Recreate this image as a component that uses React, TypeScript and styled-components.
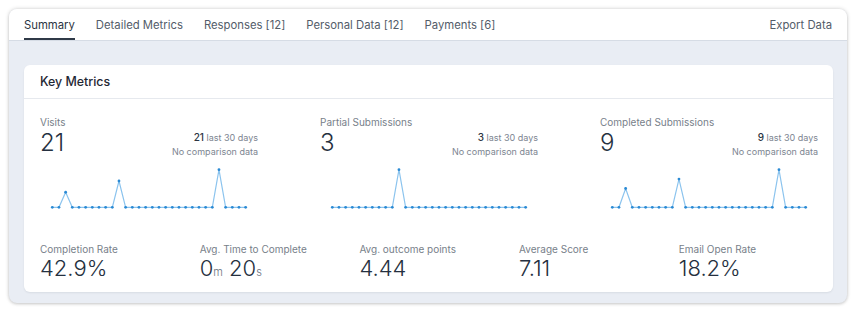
import React from "react";
import styled, { createGlobalStyle } from "styled-components";

const GlobalStyle = createGlobalStyle`
    html, body {
        margin: 0;
        padding: 0;
        background: #ffffff;
    }
    body {
        font-family: Inter, "Noto Sans", sans-serif;
        -webkit-font-smoothing: antialiased;
    }
`;

const tabs = [
    "Summary",
    "Detailed Metrics",
    "Responses [12]",
    "Personal Data [12]",
    "Payments [6]",
];

type Trend = {
    label: string;
    total: number;
    series: number[];
};

const makeSeries = (peaks: Record<number, number>) =>
    Array.from({ length: 30 }, (_, i) => peaks[i] ?? 0);

const trends: Trend[] = [
    { label: "Visits", total: 21, series: makeSeries({ 2: 4, 10: 7, 25: 10 }) },
    { label: "Partial Submissions", total: 3, series: makeSeries({ 10: 3 }) },
    { label: "Completed Submissions", total: 9, series: makeSeries({ 2: 2, 10: 3, 25: 4 }) },
];

export default function App() {
    return (
        <>
            <GlobalStyle />
            <Page>
                <Shell>
                    <TabBar>
                        <TabList>
                            {tabs.map((t, i) => (
                                <Tab key={t} $active={i === 0}>
                                    {t}
                                </Tab>
                            ))}
                        </TabList>
                        <ExportLink>Export Data</ExportLink>
                    </TabBar>
                    <Content>
                        <Card>
                            <CardHeader>Key Metrics</CardHeader>
                            <CardBody>
                                <TrendRow>
                                    {trends.map((t) => (
                                        <TrendBlock key={t.label}>
                                            <Label>{t.label}</Label>
                                            <TrendHead>
                                                <BigValue>{t.total}</BigValue>
                                                <Compare>
                                                    <span>
                                                        <strong>{t.total}</strong> last 30 days
                                                    </span>
                                                    <span>No comparison data</span>
                                                </Compare>
                                            </TrendHead>
                                            <Sparkline series={t.series} />
                                        </TrendBlock>
                                    ))}
                                </TrendRow>
                                <StatRow>
                                    <Stat>
                                        <Label>Completion Rate</Label>
                                        <StatValue>42.9%</StatValue>
                                    </Stat>
                                    <Stat>
                                        <Label>Avg. Time to Complete</Label>
                                        <StatValue>
                                            0<Unit>m</Unit> 20<Unit>s</Unit>
                                        </StatValue>
                                    </Stat>
                                    <Stat>
                                        <Label>Avg. outcome points</Label>
                                        <StatValue>4.44</StatValue>
                                    </Stat>
                                    <Stat>
                                        <Label>Average Score</Label>
                                        <StatValue>7.11</StatValue>
                                    </Stat>
                                    <Stat>
                                        <Label>Email Open Rate</Label>
                                        <StatValue>18.2%</StatValue>
                                    </Stat>
                                </StatRow>
                            </CardBody>
                        </Card>
                    </Content>
                </Shell>
            </Page>
        </>
    );
}

function Sparkline({ series }: { series: number[] }) {
    const max = Math.max(...series, 1);
    const left = 12.3;
    const step = 6.667;
    const base = 47.3;
    const top = 9.7;
    const pts = series.map((v, i) => [left + i * step, base - (v / max) * (base - top)]);
    return (
        <Chart width="218" height="52" viewBox="0 0 218 52">
            <polyline
                points={pts.map((p) => p.join(",")).join(" ")}
                fill="none"
                stroke="#8cc4ee"
                strokeWidth="1.2"
            />
            {pts.map((p, i) => (
                <circle key={i} cx={p[0]} cy={p[1]} r="1.4" fill="#2a8ad4" />
            ))}
        </Chart>
    );
}

const Page = styled.div`
    padding: 9px 10px 9px 9px;
`;
const Shell = styled.div`
    background: #e9edf4;
    border-radius: 8px;
    overflow: hidden;
    box-shadow: 0 0 4px rgba(0, 0, 0, 0.18), 0 1px 3px rgba(0, 0, 0, 0.12);
`;
const TabBar = styled.div`
    height: 31px;
    background: #ffffff;
    border-bottom: 1px solid #d6dce5;
    padding: 0 15px;
    display: flex;
    align-items: stretch;
    justify-content: space-between;
`;
const TabList = styled.div`
    display: flex;
    gap: 21px;
`;
const Tab = styled.div<{ $active?: boolean }>`
    display: flex;
    align-items: center;
    font-size: 11.3px;
    color: ${(p) => (p.$active ? "#2b3442" : "#535c69")};
    border-bottom: 2px solid ${(p) => (p.$active ? "#2f3947" : "transparent")};
    padding-top: 2px;
`;
const ExportLink = styled.div`
    display: flex;
    align-items: center;
    font-size: 11.3px;
    color: #535c69;
`;
const Content = styled.div`
    padding: 24px 14px 11px 15px;
`;
const Card = styled.div`
    background: #ffffff;
    border-radius: 6px;
    box-shadow: 0 1px 2px rgba(16, 24, 40, 0.08);
`;
const CardHeader = styled.div`
    height: 33px;
    display: flex;
    align-items: center;
    padding: 0 16px;
    font-size: 12.4px;
    font-weight: 500;
    color: #1f2733;
    border-bottom: 1px solid #e6e9ee;
`;
const CardBody = styled.div`
    padding: 16px 16px 7px;
`;
const TrendRow = styled.div`
    display: grid;
    grid-template-columns: repeat(3, 1fr);
    column-gap: 62px;
`;
const TrendBlock = styled.div`
    display: flex;
    flex-direction: column;
`;
const Label = styled.div`
    font-size: 10px;
    line-height: 14px;
    color: #787f8a;
    white-space: nowrap;
`;
const TrendHead = styled.div`
    display: flex;
    justify-content: space-between;
    align-items: flex-start;
`;
const BigValue = styled.div`
    font-size: 24px;
    font-weight: 300;
    line-height: 28px;
    color: #253040;
`;
const Compare = styled.div`
    display: flex;
    flex-direction: column;
    align-items: flex-end;
    padding-top: 1px;
    font-size: 9px;
    line-height: 14px;
    color: #7d8591;
    strong {
        font-weight: 500;
        font-size: 10px;
        color: #2b3442;
    }
`;
const Chart = styled.svg`
    display: block;
    margin-top: 1px;
`;
const StatRow = styled.div`
    display: grid;
    grid-template-columns: repeat(5, 1fr);
    column-gap: 21.5px;
    margin-top: 30px;
`;
const Stat = styled.div`
    display: flex;
    flex-direction: column;
`;
const StatValue = styled.div`
    font-size: 22px;
    font-weight: 300;
    line-height: 25px;
    color: #253040;
    white-space: nowrap;
`;
const Unit = styled.span`
    font-size: 11px;
    color: #6b7380;
`;
